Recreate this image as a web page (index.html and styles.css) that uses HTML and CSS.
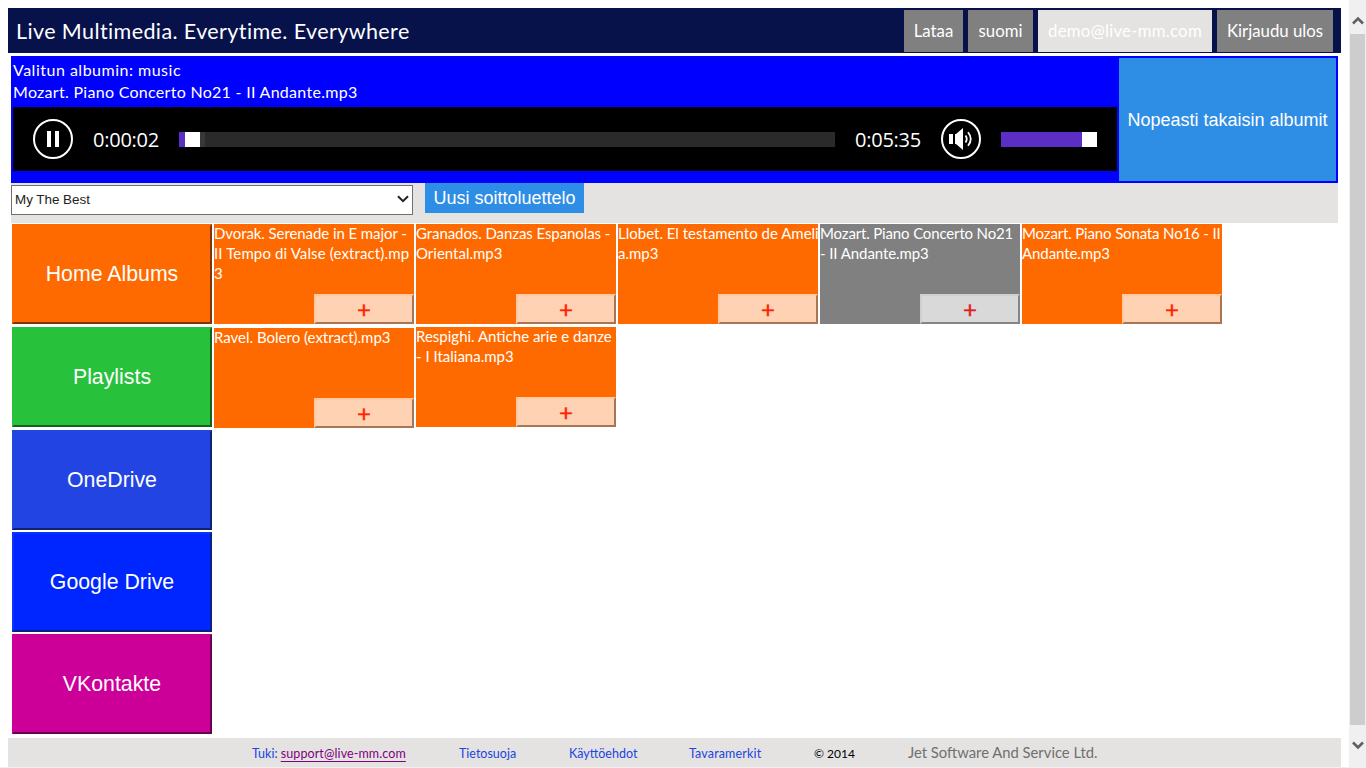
FILE: index.html
```html
<!DOCTYPE html>
<html lang="fi">
<head>
<meta charset="utf-8">
<title>Live Multimedia</title>
<link rel="stylesheet" href="styles.css">
</head>
<body>
<div class="page">
  <header class="topbar">
    <div class="brand"><span>Live Multimedia. Everytime. Everywhere</span></div>
    <nav class="nav">
      <a class="nav-item lataa"><span>Lataa</span></a>
      <a class="nav-item suomi"><span>suomi</span></a>
      <a class="nav-item user"><span>demo@live-mm.com</span></a>
      <a class="nav-item logout"><span>Kirjaudu ulos</span></a>
    </nav>
  </header>

  <section class="player">
    <div class="player-main">
      <div class="player-line album"><span>Valitun albumin: music</span></div>
      <div class="player-line track"><span>Mozart. Piano Concerto No21 - II Andante.mp3</span></div>
      <div class="controls">
        <svg class="round" viewBox="0 0 40 40"><circle cx="20" cy="20" r="19" fill="none" stroke="#fff" stroke-width="2"/><path d="M14 12h4v16h-4zM22 12h4v16h-4z" fill="#fff"/></svg>
        <span class="time elapsed">0:00:02</span>
        <div class="seek"><div class="played"></div><div class="thumb"></div><div class="buffered"></div></div>
        <span class="time total">0:05:35</span>
        <svg class="round" viewBox="0 0 40 40"><circle cx="20" cy="20" r="19" fill="none" stroke="#fff" stroke-width="2"/><path d="M8 15h4v10H8zM14 15h1l7-6v22l-7-6h-1z" fill="#fff"/><path d="M24.500 16.500q2.500 3.500 0 7M27 13.300q5.500 6.700 0 13.400" fill="none" stroke="#fff" stroke-width="1.800"/></svg>
        <div class="volume"><div class="thumb"></div></div>
      </div>
    </div>
    <button class="back"><span>Nopeasti takaisin albumit</span></button>
  </section>

  <section class="playlist-bar">
    <div class="select"><span>My The Best</span><svg width="12" height="8" viewBox="0 0 12 8"><path d="M1 1.200L6 6.200L11 1.200" fill="none" stroke="#222" stroke-width="2"/></svg></div>
    <button class="new-list"><span>Uusi soittoluettelo</span></button>
  </section>

  <main class="content">
    <aside class="menu">
      <button class="menu-item home"><span>Home Albums</span></button>
      <button class="menu-item lists"><span>Playlists</span></button>
      <button class="menu-item onedrive"><span>OneDrive</span></button>
      <button class="menu-item gdrive"><span>Google Drive</span></button>
      <button class="menu-item vk"><span>VKontakte</span></button>
    </aside>
    <div class="tiles">
      <div class="tile"><p><span class="snug">Dvorak. Serenade in E major -</span><br><span class="loose">II Tempo di Valse (extract).mp</span><br>3</p><button class="add">+</button></div>
      <div class="tile"><p><span class="snug">Granados. Danzas Espanolas -</span><br>Oriental.mp3</p><button class="add">+</button></div>
      <div class="tile"><p>Llobet. El testamento de Ameli<br>a.mp3</p><button class="add">+</button></div>
      <div class="tile current"><p><span class="tight">Mozart. Piano Concerto No21</span><br><span class="snug">- II Andante.mp3</span></p><button class="add">+</button></div>
      <div class="tile"><p><span class="tight">Mozart. Piano Sonata No16 - II</span><br><span class="snug">Andante.mp3</span></p><button class="add">+</button></div>
      <div class="tile lower"><p>Ravel. Bolero (extract).mp3</p><button class="add">+</button></div>
      <div class="tile"><p>Respighi. Antiche arie e danze<br>- I Italiana.mp3</p><button class="add">+</button></div>
    </div>
  </main>

  <footer class="footer">
    <span class="f-support">Tuki: <a>support@live-mm.com</a></span>
    <span class="f-privacy">Tietosuoja</span>
    <span class="f-terms">Käyttöehdot</span>
    <span class="f-marks">Tavaramerkit</span>
    <span class="f-copy">© 2014</span>
    <span class="f-company">Jet Software And Service Ltd.</span>
  </footer>
</div>
<div class="scrollbar">
  <svg width="12" height="9" viewBox="0 0 12 9"><path d="M1 7.500L6 2.500L11 7.500" fill="none" stroke="#606060" stroke-width="2.600"/></svg>
  <div class="scroll-thumb"></div>
  <svg width="12" height="9" viewBox="0 0 12 9"><path d="M1 1.500L6 6.500L11 1.500" fill="none" stroke="#606060" stroke-width="2.600"/></svg>
</div>
</body>
</html>
```
FILE: styles.css
```css
* { box-sizing: border-box; }
body { margin: 0; display: flex; width: 1366px; height: 768px; overflow: hidden; background: #fff; font-family: Lato, sans-serif; white-space: nowrap; }
button { margin: 0; padding: 0; font-family: "Liberation Sans", sans-serif; color: #fff; border: 0; border-radius: 0; white-space: nowrap; }
.page { width: 1349px; height: 768px; padding: 8px 8px 0; border-bottom: 1px solid #f0f0f0; }
.topbar { display: flex; justify-content: space-between; height: 45px; padding: 2px 8px 1px; background: #07124b; color: #fff; }
.brand { font-size: 21.5px; line-height: 43px; letter-spacing: 0.4px; }
.nav { display: flex; gap: 5px; font-size: 16.8px; line-height: 42px; text-align: center; }
.nav-item { height: 42px; background: #808080; }
.lataa { width: 59px; }
.suomi { width: 65px; }
.user { width: 174px; background: #e4e3e1; letter-spacing: 0.25px; }
.logout { width: 116px; }

.player { display: flex; justify-content: space-between; margin: 3px 3px 0; height: 127px; padding: 2px; background: #00f; color: #fff; }
.player-main { width: 1104px; }
.player-line { height: 22px; font-size: 16px; line-height: 23px; }
.album { letter-spacing: 0.5px; }
.track { letter-spacing: 0.29px; }
.controls { display: flex; align-items: center; height: 64px; margin-top: 5px; padding: 0 20px; background: #000; }
.round { width: 40px; height: 40px; }
.time { width: 66px; margin: 0 20px; font: 20px "Open Sans", sans-serif; letter-spacing: -0.25px; }
.seek { display: flex; width: 656px; height: 15px; background: #2a2a2a; }
.played { width: 6px; background: #5b2ec5; }
.thumb { width: 15px; background: #fff; }
.buffered { width: 5px; background: #383838; }
.volume { display: flex; justify-content: flex-end; width: 96px; height: 15px; margin-left: 20px; background: #5b2ec5; }
.back { width: 217px; height: 123px; padding-top: 1px; background: #2e8de5; font-size: 18px; }

.playlist-bar { display: flex; align-items: flex-start; gap: 12px; height: 40px; margin: 0 3px; background: #e4e3e1; }
.select { display: flex; justify-content: space-between; align-items: center; width: 402px; height: 30px; margin-top: 2px; padding: 0 3px 2px; border: 1px solid #707070; background: #fff; color: #222; font: 13.4px "Liberation Sans", sans-serif; }
.new-list { width: 159px; height: 30px; background: #2e8de5; font-size: 18px; }

.content { display: flex; gap: 2px; height: 515px; padding: 1px 4px 0; }
.menu { display: flex; flex-direction: column; gap: 2px; }
.menu-item { width: 200px; height: 100px; font-size: 21.3px; border: 2px solid; }
.home, .lists { margin-bottom: 1px; }
.home { background: #ff6a00; border-color: #ff6a00 #803500 #803500 #ff6a00; }
.lists { background: #27c13c; border-color: #27c13c #14611e #14611e #27c13c; }
.onedrive { background: #2144e3; border-color: #2144e3 #112272 #112272 #2144e3; }
.gdrive { background: #0026ff; border-color: #0d31ff #0d1f80 #0d1f80 #0d31ff; }
.vk { background: #cc0099; border-color: #cc0099 #66004d #66004d #cc0099; }

.tiles { display: grid; grid-template-columns: repeat(5, 200px); grid-auto-rows: 100px; gap: 3px 2px; }
.tile { display: flex; flex-direction: column; justify-content: space-between; align-items: flex-end; height: 100px; background: #ff6a00; color: #fff; }
.tile p { width: 100%; margin: -1px 0 0; font-size: 15px; line-height: 20px; }
.tile.current { background: #808080; }
.tile.lower { margin-top: 1px; }
.loose { letter-spacing: 0.13px; }
.snug { letter-spacing: -0.08px; }
.tight { letter-spacing: -0.15px; }
.add { width: 100px; height: 30px; flex: none; background: #ffd2b3; border: 2px solid; border-color: #ffc9a3 #a87555 #a87555 #ffc9a3; color: #f20; font: 24px/26px Lato, sans-serif; -webkit-text-stroke: 0.4px; }
.current .add { background: #d9d9d9; border-color: #cfcfcf #858585 #858585 #cfcfcf; color: #dc2020; }

.footer { display: flex; height: 29px; padding-left: 244px; background: #e4e3e1; font-size: 12.5px; line-height: 32px; color: #2144e3; }
.footer a { color: #800080; text-decoration: underline; text-underline-offset: 3px; letter-spacing: 0.1px; }
.f-support { width: 207px; }
.f-privacy { width: 110px; }
.f-terms { width: 120px; }
.f-marks { width: 125px; letter-spacing: 0.15px; }
.f-copy { width: 94px; font-size: 12px; color: #000; }
.f-company { font-size: 14.8px; line-height: 29px; color: #707070; }

.scrollbar { display: flex; flex-direction: column; align-items: center; width: 17px; height: 768px; padding-top: 16px; background: #f0f0f0; }
.scroll-thumb { width: 15px; height: 691px; margin: 9px 0 16px; background: #cdcdcd; }
```
